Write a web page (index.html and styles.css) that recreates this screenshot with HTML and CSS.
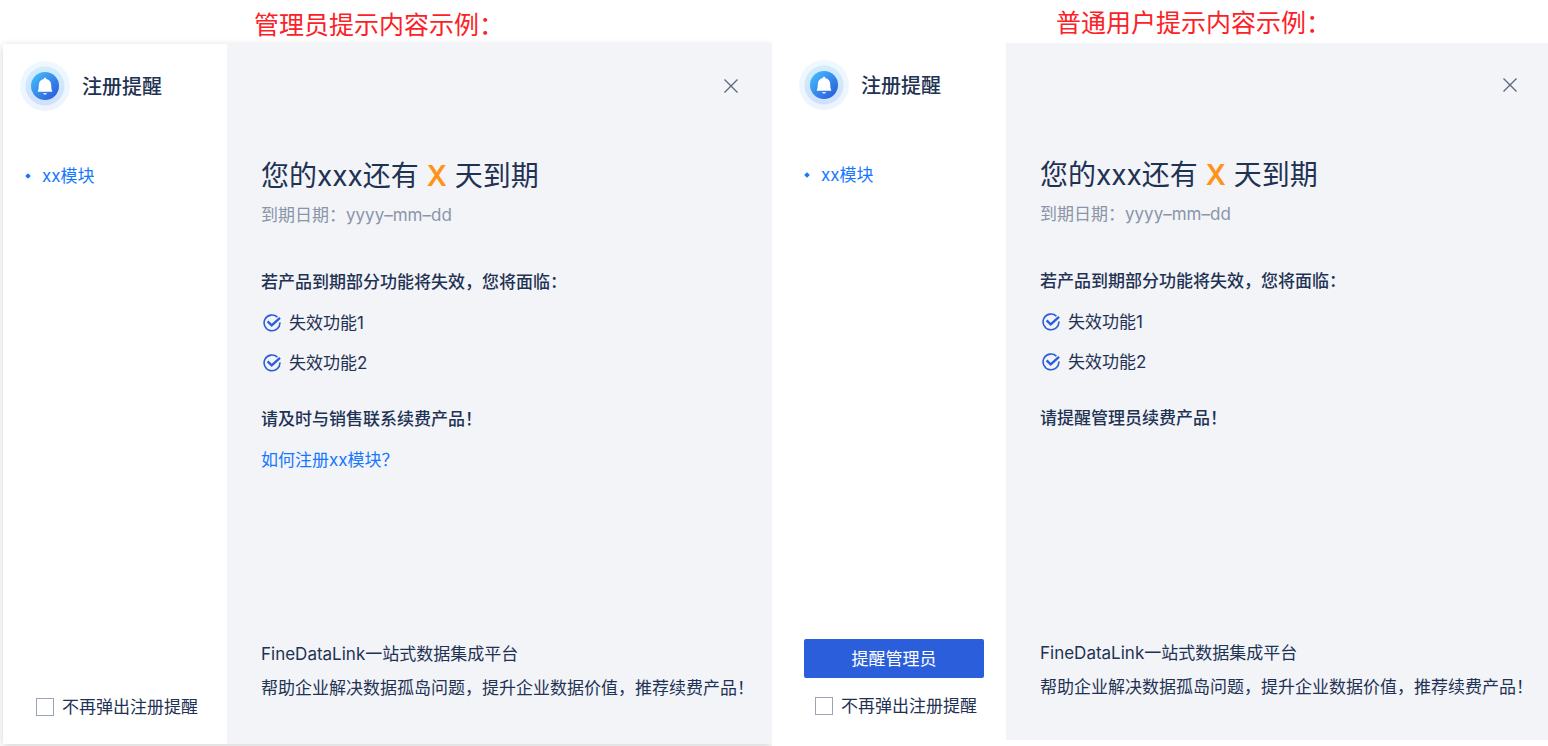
FILE: index.html
```html
<!DOCTYPE html>
<html lang="zh-CN">
<head>
    <meta charset="UTF-8">
    <meta name="viewport" content="width=device-width, initial-scale=1.0">
    <title>注册提醒</title>
    <link rel="stylesheet" href="styles.css">
</head>
<body>

<!-- 图标定义 -->
<svg class="icon-defs" width="0" height="0" aria-hidden="true">
    <defs>
        <linearGradient id="bellFill" x1="0" y1="0" x2="1" y2="1">
            <stop offset="0.1" stop-color="#44b8fb"/>
            <stop offset="0.9" stop-color="#2b5edb"/>
        </linearGradient>
        <linearGradient id="haloFill" x1="0" y1="0" x2="0" y2="1">
            <stop offset="0" stop-color="#44b8fb"/>
            <stop offset="1" stop-color="#3b7df0"/>
        </linearGradient>
    </defs>
    <symbol id="icon-bell" viewBox="0 0 50 50">
        <circle cx="25" cy="25" r="25" fill="url(#haloFill)" opacity="0.09"/>
        <circle cx="25" cy="25" r="19.5" fill="url(#haloFill)" opacity="0.17"/>
        <circle cx="25" cy="25" r="14" fill="url(#bellFill)"/>
        <path d="M25 16.8c.8 0 1.2.5 1.2 1.3 3 .6 4.9 2.900 5 5.900l.2 3.500c.1 1 .4 1.800.8 2.500.2.400 0 .8-.5.8H18.300c-.5 0-.7-.4-.5-.8.400-.7.700-1.500.8-2.500l.2-3.500c.1-3 2-5.300 5-5.900 0-.8.400-1.300 1.200-1.300z" fill="#fff"/>
        <path d="M23 32.300h4c-.3.900-1 1.300-2 1.300s-1.700-.4-2-1.300z" fill="#fff"/>
    </symbol>
    <symbol id="icon-check" viewBox="0 0 18 18">
        <path d="M14.400 3.100A7.900 7.900 0 1 0 16.900 8.400" fill="none" stroke="#2b5edb" stroke-width="1.600"/>
        <path d="M4.600 7.400l4.100 4L17 3.800" fill="none" stroke="#2b5edb" stroke-width="2.400"/>
    </symbol>
    <symbol id="icon-close" viewBox="0 0 14 14">
        <path d="M0.500 0.500l13 13M13.500 0.500l-13 13" fill="none" stroke="#5a6780" stroke-width="1.300"/>
    </symbol>
</svg>

<div class="page">

    <!-- 管理员 -->
    <section class="example example-admin">
        <h2 class="caption">管理员提示内容示例：</h2>
        <div class="dialog">
            <aside class="sidebar">
                <div class="brand">
                    <svg class="brand-icon" aria-hidden="true"><use href="#icon-bell"/></svg>
                    <span>注册提醒</span>
                </div>
                <ul class="modules">
                    <li><a href="#">xx模块</a></li>
                </ul>
                <div class="sidebar-footer">
                    <label class="no-remind"><input type="checkbox">不再弹出注册提醒</label>
                </div>
            </aside>
            <main class="content">
                <div class="toolbar">
                    <button type="button" class="close" aria-label="关闭"><svg aria-hidden="true"><use href="#icon-close"/></svg></button>
                </div>
                <h1>您的xxx还有 <strong>X</strong> 天到期</h1>
                <p class="date">到期日期：yyyy–mm–dd</p>
                <p class="lead">若产品到期部分功能将失效，您将面临：</p>
                <ul class="features">
                    <li><svg aria-hidden="true"><use href="#icon-check"/></svg>失效功能1</li>
                    <li><svg aria-hidden="true"><use href="#icon-check"/></svg>失效功能2</li>
                </ul>
                <p class="action">请及时与销售联系续费产品！</p>
                <a class="help" href="#">如何注册xx模块？</a>
                <footer class="slogan">
                    <p>FineDataLink一站式数据集成平台</p>
                    <p>帮助企业解决数据孤岛问题，提升企业数据价值，推荐续费产品！</p>
                </footer>
            </main>
        </div>
    </section>

    <!-- 普通用户 -->
    <section class="example example-user">
        <h2 class="caption">普通用户提示内容示例：</h2>
        <div class="dialog">
            <aside class="sidebar">
                <div class="brand">
                    <svg class="brand-icon" aria-hidden="true"><use href="#icon-bell"/></svg>
                    <span>注册提醒</span>
                </div>
                <ul class="modules">
                    <li><a href="#">xx模块</a></li>
                </ul>
                <div class="sidebar-footer">
                    <button type="button" class="remind">提醒管理员</button>
                    <label class="no-remind"><input type="checkbox">不再弹出注册提醒</label>
                </div>
            </aside>
            <main class="content">
                <div class="toolbar">
                    <button type="button" class="close" aria-label="关闭"><svg aria-hidden="true"><use href="#icon-close"/></svg></button>
                </div>
                <h1>您的xxx还有 <strong>X</strong> 天到期</h1>
                <p class="date">到期日期：yyyy–mm–dd</p>
                <p class="lead">若产品到期部分功能将失效，您将面临：</p>
                <ul class="features">
                    <li><svg aria-hidden="true"><use href="#icon-check"/></svg>失效功能1</li>
                    <li><svg aria-hidden="true"><use href="#icon-check"/></svg>失效功能2</li>
                </ul>
                <p class="action">请提醒管理员续费产品！</p>
                <footer class="slogan">
                    <p>FineDataLink一站式数据集成平台</p>
                    <p>帮助企业解决数据孤岛问题，提升企业数据价值，推荐续费产品！</p>
                </footer>
            </main>
        </div>
    </section>

</div>

</body>
</html>
```
FILE: styles.css
```css
* {
    box-sizing: border-box;
}
body {
    margin: 0;
    background-color: #fff;
    color: #1f3253;
    font-family: Inter, "Noto Sans CJK SC", sans-serif;
    font-size: 17px;
    line-height: 24px;
}
h1, h2, p, ul {
    margin: 0;
    padding: 0;
    font-weight: 400;
}
ul {
    list-style: none;
}
a {
    color: #1677ff;
    text-decoration: none;
}
button {
    padding: 0;
    border: none;
    font: inherit;
    cursor: pointer;
}
.icon-defs {
    display: block;
}
.page {
    display: grid;
    grid-template-columns: 772fr 776fr;
    min-height: 100vh;
}
.example {
    display: flex;
    flex-direction: column;
    overflow: hidden;
}
.example-admin {
    padding: 0 0 2px 3px;
}
.example-user {
    padding: 0 0 6px 10px;
}
.caption {
    height: 44px;
    padding-left: 251px;
    color: #fc2127;
    font-family: "Noto Sans CJK SC", sans-serif;
    font-size: 25px;
    line-height: 46px;
    white-space: nowrap;
}
.example-user .caption {
    height: 43px;
    padding-left: 274px;
    line-height: 42px;
}
.dialog {
    display: flex;
    flex: 1;
    background-color: #fff;
}
.example-admin .dialog {
    box-shadow: 0 2px 8px rgba(0, 0, 0, 0.18);
}

/* 左侧栏 */
.sidebar {
    display: flex;
    flex-direction: column;
    flex: 0 0 224px;
    padding: 17px 22px 25px;
}
.brand {
    display: flex;
    align-items: center;
    gap: 12px;
    margin-left: -5px;
    font-family: "Noto Sans CJK SC", sans-serif;
    font-size: 20px;
    font-weight: 500;
}
.brand-icon {
    width: 50px;
    height: 50px;
}
.modules {
    margin-top: 53px;
}
.modules li {
    display: flex;
    align-items: center;
    gap: 12px;
}
.modules li::before {
    content: "";
    width: 4px;
    height: 4px;
    margin-left: 1px;
    background-color: #1677ff;
    transform: rotate(45deg);
}
.sidebar-footer {
    display: flex;
    flex-direction: column;
    gap: 16px;
    margin-top: auto;
}
.remind {
    height: 39px;
    border-radius: 2px;
    background-color: #2b5edb;
    color: #fff;
}
.no-remind {
    display: flex;
    align-items: center;
    gap: 8px;
    padding-left: 11px;
    white-space: nowrap;
}
.no-remind input {
    appearance: none;
    flex: none;
    width: 18px;
    height: 18px;
    margin: 0;
    border: 1px solid #9aa4b4;
    background-color: #fff;
}
.no-remind input:checked {
    background-color: #2b5edb;
}

/* 右侧内容 */
.content {
    display: flex;
    flex-direction: column;
    flex: 1;
    min-width: 0;
    padding: 0 34px 44px;
    background-color: #f2f4f8;
    white-space: nowrap;
}
.toolbar {
    display: flex;
    align-items: center;
    justify-content: flex-end;
    height: 84px;
}
.close {
    width: 14px;
    height: 14px;
    background: none;
}
.close svg {
    display: block;
    width: 14px;
    height: 14px;
}
.content h1 {
    margin-top: 28px;
    font-size: 28px;
    line-height: 40px;
}
.content h1 strong {
    color: #ff931a;
    font-weight: 600;
}
.date {
    margin-top: 7px;
    color: #8b95a8;
}
.lead {
    margin-top: 43px;
    font-weight: 500;
}
.features li {
    display: flex;
    align-items: center;
    gap: 8px;
    margin-top: 17px;
    padding-left: 2px;
}
.features li + li {
    margin-top: 16px;
}
.features svg {
    width: 18px;
    height: 18px;
}
.action {
    margin-top: 32px;
    font-weight: 500;
}
.help {
    align-self: flex-start;
    margin-top: 17px;
}
.slogan {
    margin-top: auto;
}
.slogan p + p {
    margin-top: 10px;
}

.example-user .sidebar {
    padding-bottom: 22px;
}
.example-user .content {
    padding-right: 31px;
    padding-bottom: 41px;
}
```
